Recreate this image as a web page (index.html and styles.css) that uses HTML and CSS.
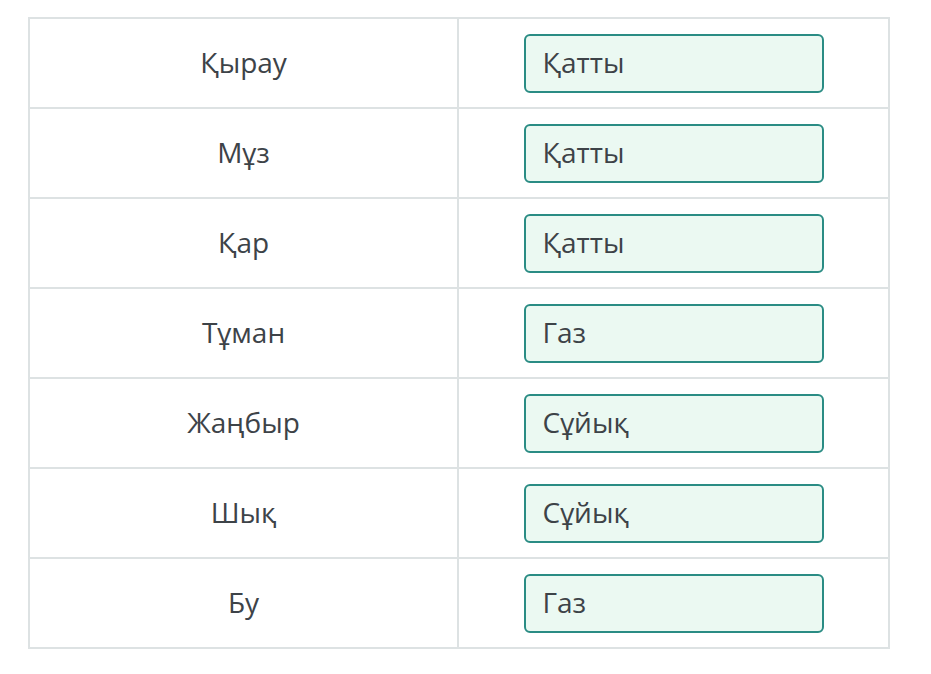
FILE: index.html
```html
<!DOCTYPE html>
<html>
<head>
<meta charset="utf-8">
<link rel="stylesheet" href="styles.css">
</head>
<body>
<div class="table">
  <div class="row"><div class="cell term">Қырау</div><div class="cell"><div class="box">Қатты</div></div></div>
  <div class="row"><div class="cell term">Мұз</div><div class="cell"><div class="box">Қатты</div></div></div>
  <div class="row"><div class="cell term">Қар</div><div class="cell"><div class="box">Қатты</div></div></div>
  <div class="row"><div class="cell term">Тұман</div><div class="cell"><div class="box">Газ</div></div></div>
  <div class="row"><div class="cell term">Жаңбыр</div><div class="cell"><div class="box">Сұйық</div></div></div>
  <div class="row"><div class="cell term">Шық</div><div class="cell"><div class="box">Сұйық</div></div></div>
  <div class="row"><div class="cell term">Бу</div><div class="cell"><div class="box">Газ</div></div></div>
</div>
</body>
</html>
```
FILE: styles.css
```css
html, body {
  margin: 0;
  padding: 0;
  background: #ffffff;
}
body {
  padding: 17px 0 0 28px;
  font-family: "Open Sans", "Noto Sans", sans-serif;
  color: #3d4348;
}
.table {
  width: 858px;
  border: 2px solid #dde2e3;
  border-bottom: none;
}
.row {
  display: grid;
  grid-template-columns: 429px 1fr;
  height: 88px;
  border-bottom: 2px solid #dde2e3;
}
.cell {
  display: flex;
  align-items: center;
  justify-content: center;
}
.term {
  border-right: 2px solid #dde2e3;
  font-size: 28px;
  line-height: 1;
  padding-bottom: 3px;
}
.box {
  box-sizing: border-box;
  width: 300px;
  height: 59px;
  border: 2px solid #2a8c84;
  border-radius: 6px;
  background: #ebf9f2;
  display: flex;
  align-items: center;
  padding-left: 17px;
  padding-bottom: 3px;
  font-size: 28px;
  line-height: 1;
}
```
